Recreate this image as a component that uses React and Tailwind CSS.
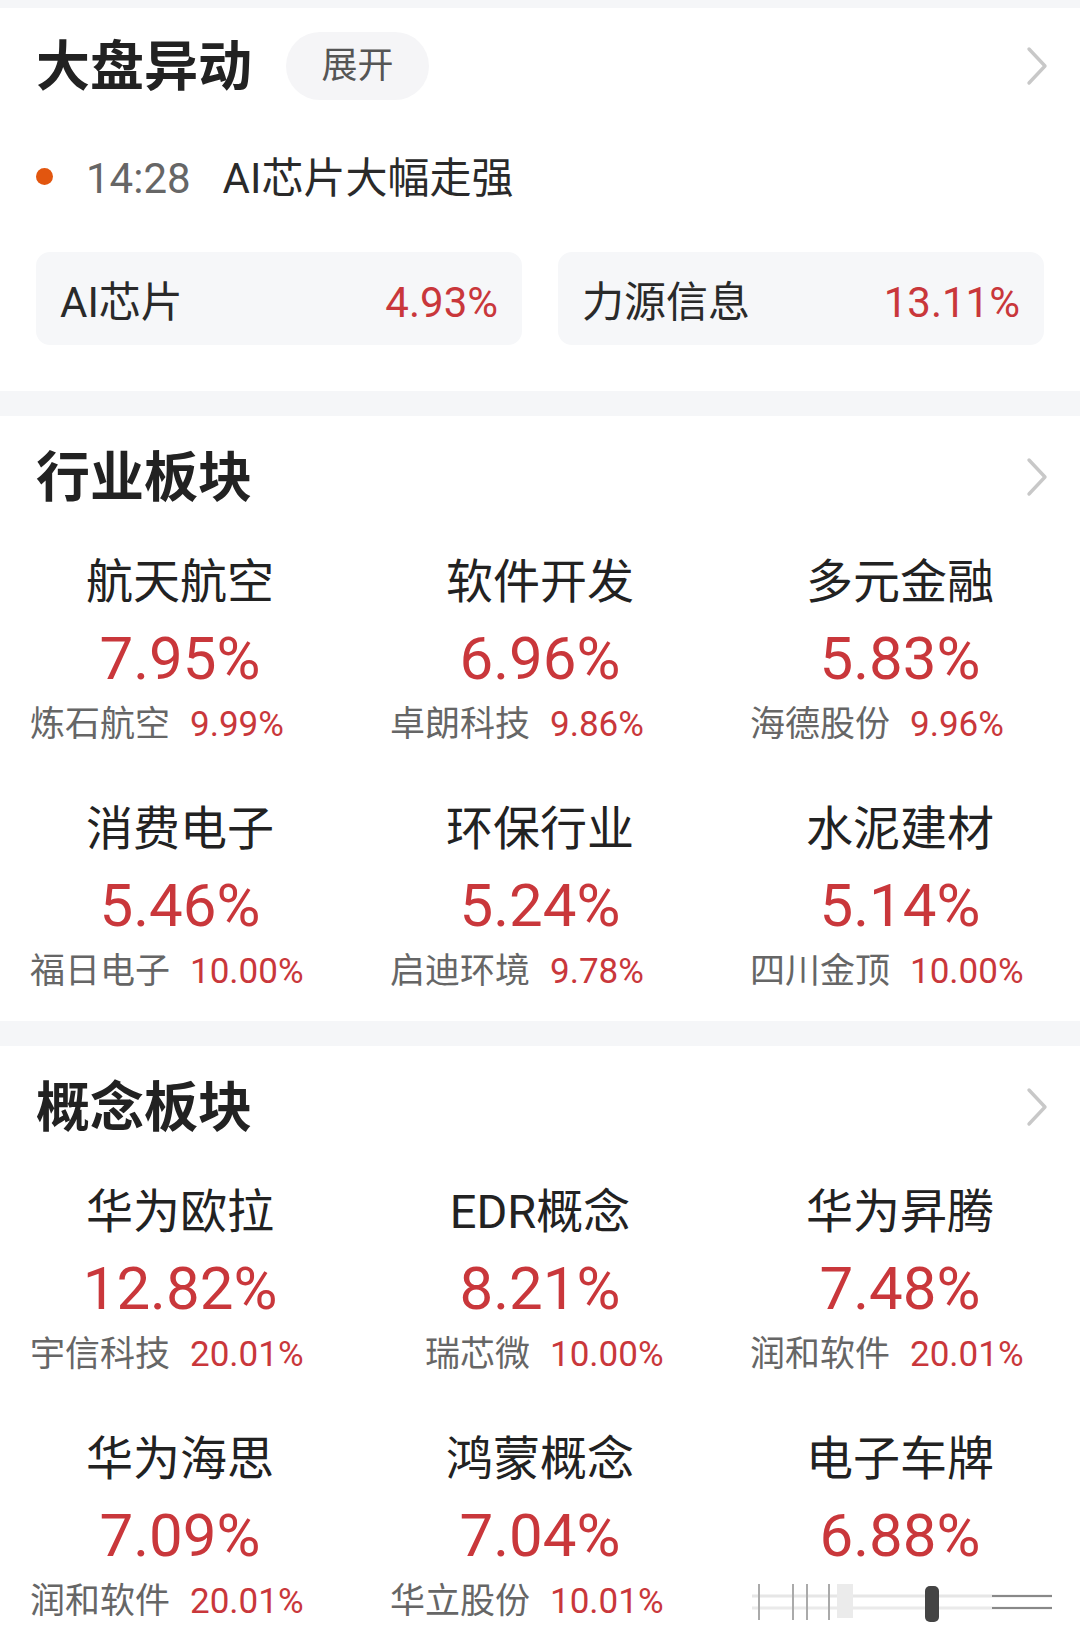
import React from 'react';

const industry = [
  { name: '航天航空', pct: '7.95%', stock: '炼石航空', stockPct: '9.99%' },
  { name: '软件开发', pct: '6.96%', stock: '卓朗科技', stockPct: '9.86%' },
  { name: '多元金融', pct: '5.83%', stock: '海德股份', stockPct: '9.96%' },
  { name: '消费电子', pct: '5.46%', stock: '福日电子', stockPct: '10.00%' },
  { name: '环保行业', pct: '5.24%', stock: '启迪环境', stockPct: '9.78%' },
  { name: '水泥建材', pct: '5.14%', stock: '四川金顶', stockPct: '10.00%' },
];

const concept = [
  { name: '华为欧拉', pct: '12.82%', stock: '宇信科技', stockPct: '20.01%' },
  { name: 'EDR概念', pct: '8.21%', stock: '瑞芯微', stockPct: '10.00%' },
  { name: '华为昇腾', pct: '7.48%', stock: '润和软件', stockPct: '20.01%' },
  { name: '华为海思', pct: '7.09%', stock: '润和软件', stockPct: '20.01%' },
  { name: '鸿蒙概念', pct: '7.04%', stock: '华立股份', stockPct: '10.01%' },
  { name: '电子车牌', pct: '6.88%', stock: null, stockPct: null },
];

const Chevron = () => (
  <svg width="24" height="40" viewBox="0 0 24 40" className="ml-auto mr-[-5px]" fill="none">
    <path d="M4 3 L20 20 L4 37" stroke="#c8c8c8" strokeWidth="3.4" strokeLinecap="round" strokeLinejoin="round" />
  </svg>
);

// blurred scan artefact under the last concept cell
const Smudge = () => (
  <svg width="304" height="44" viewBox="0 0 304 44" fill="none">
    <path d="M0 16 H300" stroke="#e6e6e6" strokeWidth="3" />
    <path d="M0 28 H300" stroke="#eaeaea" strokeWidth="3" />
    <path d="M240 16 H300 M240 28 H300" stroke="#888" strokeWidth="2" />
    <path d="M7 4 V40 M41 4 V40 M55 4 V40 M77 4 V40" stroke="#aaa" strokeWidth="2" />
    <rect x="85" y="4" width="16" height="34" fill="#ebebeb" />
    <rect x="173" y="6" width="14" height="36" rx="5" fill="#444" />
  </svg>
);

const SectionHeader = ({ title }) => (
  <div className="flex h-[68px] items-center">
    <h2 className="pt-[4px] text-[54px] font-bold leading-none text-[#222]">{title}</h2>
    <Chevron />
  </div>
);

const Cell = ({ item }) => (
  <div className="flex flex-col items-center">
    <div className="text-[47px] leading-[56px] text-[#222]">{item.name}</div>
    <div className="mt-[13px] text-[60px] leading-[72px] text-[#c9373b]">{item.pct}</div>
    <div className="mt-[8px] grid h-[44px] w-full grid-cols-2 gap-[20px] text-[35px] leading-[44px]">
      {item.stock ? (
        <>
          <span className="text-right text-[#666]">{item.stock}</span>
          <span className="text-left text-[#c9373b]">{item.stockPct}</span>
        </>
      ) : (
        <span className="col-span-2 flex items-center pl-[32px]">
          <Smudge />
        </span>
      )}
    </div>
  </div>
);

const Board = ({ title, items, last }) => (
  <section className={last ? 'pt-[27px] pb-[24px]' : 'pt-[27px] pb-[27px]'}>
    <div className="px-[36px]">
      <SectionHeader title={title} />
    </div>
    <div className="mt-[43px] grid grid-cols-3 gap-y-[54px]">
      {items.map((item) => (
        <Cell key={item.name} item={item} />
      ))}
    </div>
  </section>
);

export default function App() {
  return (
    <div className="w-[1080px] bg-white font-['Roboto','Noto_Sans_CJK_SC',sans-serif]">
      <div className="h-[8px] bg-[#f5f6f8]" />

      <section className="px-[36px] pt-[24px] pb-[46px]">
        <div className="flex h-[68px] items-center">
          <h2 className="pt-[4px] text-[54px] font-bold leading-none text-[#222]">大盘异动</h2>
          <span className="ml-[34px] flex h-[68px] w-[143px] items-center justify-center rounded-full bg-[#f5f5f7] text-[36px] text-[#555]">
            展开
          </span>
          <Chevron />
        </div>

        <div className="mt-[52px] flex h-[48px] items-center">
          <span className="h-[17px] w-[17px] rounded-full bg-[#e2560f]" />
          <span className="ml-[33px] pt-[4px] text-[42px] text-[#666]">14:28</span>
          <span className="ml-[32px] pt-[4px] text-[42px] text-[#2a2a2a]">AI芯片大幅走强</span>
        </div>

        <div className="mt-[52px] grid grid-cols-2 gap-[36px]">
          <div className="flex h-[93px] items-center justify-between rounded-[14px] bg-[#f6f7f9] px-[24px] pt-[8px] text-[42px]">
            <span className="text-[#2a2a2a]">AI芯片</span>
            <span className="text-[#c9373b]">4.93%</span>
          </div>
          <div className="flex h-[93px] items-center justify-between rounded-[14px] bg-[#f6f7f9] px-[24px] pt-[8px] text-[42px]">
            <span className="text-[#2a2a2a]">力源信息</span>
            <span className="text-[#c9373b]">13.11%</span>
          </div>
        </div>
      </section>

      <div className="h-[25px] bg-[#f5f6f8]" />
      <Board title="行业板块" items={industry} />
      <div className="h-[25px] bg-[#f5f6f8]" />
      <Board title="概念板块" items={concept} last />
    </div>
  );
}
